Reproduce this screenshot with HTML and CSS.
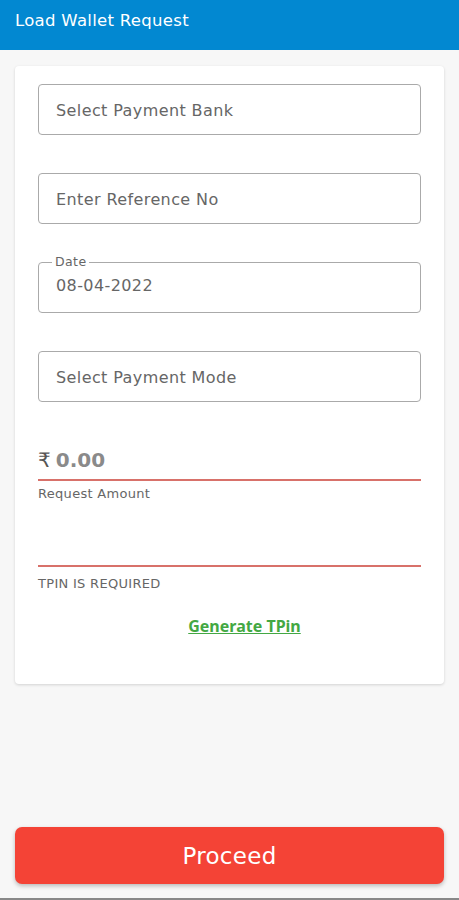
FILE: index.html
```html
<!DOCTYPE html>
<html lang="en">
<head>
  <meta charset="UTF-8">
  <title>Load Wallet Request</title>
  <meta name="viewport" content="width=device-width, initial-scale=1.0">
  <link rel="stylesheet" href="styles.css">
</head>
<body>
  <div class="app-bar">Load Wallet Request</div>
  <div class="card">
    <div class="box-field">Select Payment Bank</div>
    <div class="box-field">Enter Reference No</div>
    <fieldset class="box-field date-field">
      <legend>Date</legend>
      <span>08-04-2022</span>
    </fieldset>
    <div class="box-field">Select Payment Mode</div>
    <div class="line-group">
      <div class="line-field amount"><span class="rupee">₹</span> <span class="value">0.00</span></div>
      <div class="hint">Request Amount</div>
    </div>
    <div class="line-group tpin-group">
      <div class="line-field"></div>
      <div class="hint">TPIN IS REQUIRED</div>
    </div>
    <a class="tpin-link" href="#">Generate TPin</a>
  </div>
  <button class="proceed-btn">Proceed</button>
  <div class="nav-line"></div>
</body>
</html>
```

FILE: styles.css
```css
body {
  margin: 0;
  height: 900px;
  background: #f7f7f7;
  display: flex;
  flex-direction: column;
  font-family: "DejaVu Sans", "Noto Sans", sans-serif;
  color: #555;
}
.app-bar {
  height: 50px;
  box-sizing: border-box;
  padding: 10px 15px 0;
  background: #0288d1;
  color: #fff;
  font-size: 16.5px;
  letter-spacing: 0.3px;
  line-height: 22px;
}
.card {
  margin: 16px 15px 0;
  padding: 18px 23px 47px;
  background: #fff;
  border-radius: 4px;
  box-shadow: 0 1px 3px rgba(0,0,0,0.15);
  display: flex;
  flex-direction: column;
  gap: 38px;
}
.box-field {
  height: 51px;
  box-sizing: border-box;
  margin: 0;
  padding: 2px 17px 0;
  border: 1px solid #aaa;
  border-radius: 4px;
  display: flex;
  align-items: center;
  font-size: 16px;
  letter-spacing: 0.4px;
  color: #666;
  min-width: 0;
}
.date-field {
  display: block;
  height: 58px;
  margin-top: -7px;
  padding: 0 17px;
}
.date-field legend {
  padding: 0 3px;
  margin-left: -4px;
  font-size: 12.5px;
  line-height: 14px;
  color: #666;
}
.date-field span {
  display: block;
  margin-top: 5px;
  line-height: 24px;
  font-size: 16px;
}
.line-group {
  display: flex;
  flex-direction: column;
  gap: 5px;
}
.tpin-group {
  margin-top: -13px;
  gap: 9px;
}
.line-field {
  height: 41px;
  box-sizing: border-box;
  border-bottom: 2px solid #d8716a;
  display: flex;
  align-items: center;
}
.amount .rupee {
  font-size: 20px;
  color: #555;
}
.amount .value {
  margin-left: 5px;
  font-size: 20px;
  font-weight: bold;
  color: #8a8a8a;
}
.hint {
  font-size: 13px;
  letter-spacing: 0.3px;
  color: #666;
}
.tpin-link {
  margin-top: -14px;
  margin-left: 30px;
  align-self: center;
  font-family: "Noto Sans", sans-serif;
  font-size: 16px;
  font-weight: bold;
  color: #43a843;
  text-decoration: underline;
}
.proceed-btn {
  margin: auto 15px 14px;
  height: 57px;
  border: none;
  border-radius: 7px;
  background: #f44336;
  box-shadow: 0 2px 4px rgba(0,0,0,0.25);
  color: #fff;
  font-family: inherit;
  font-size: 23px;
  letter-spacing: 0.3px;
}
.nav-line {
  height: 2px;
  background: #888;
}
```
